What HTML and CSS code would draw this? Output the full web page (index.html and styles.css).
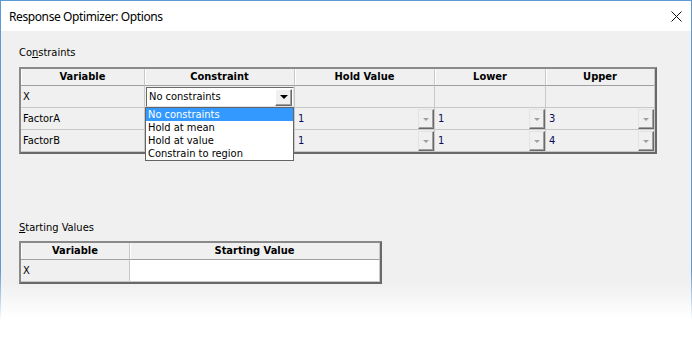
FILE: index.html
```html
<!DOCTYPE html>
<html lang="en">
<head>
    <meta charset="UTF-8">
    <meta name="viewport" content="width=device-width, initial-scale=1.0">
    <title>Response Optimizer: Options</title>
    <link rel="stylesheet" href="styles.css">
</head>
<body>
    <div class="window">
        <div class="titlebar">
            <span class="title">Response Optimizer: Options</span>
            <svg class="close" width="11" height="11" viewBox="0 0 11 11">
                <path d="M0.5 0.5 L10.5 10.5 M10.5 0.5 L0.5 10.5" stroke="#111" stroke-width="1" fill="none"/>
            </svg>
        </div>
        <div class="content">
            <div class="label">Co<u>n</u>straints</div>
            <div class="grid constraints">
                <div class="cell head">Variable</div>
                <div class="cell head">Constraint</div>
                <div class="cell head">Hold Value</div>
                <div class="cell head">Lower</div>
                <div class="cell head">Upper</div>

                <div class="cell">X</div>
                <div class="cell open">
                    <div class="combo">
                        <span>No constraints</span>
                        <span class="combo-btn"><i class="arrow"></i></span>
                    </div>
                    <ul class="dropdown">
                        <li class="selected">No constraints</li>
                        <li>Hold at mean</li>
                        <li>Hold at value</li>
                        <li>Constrain to region</li>
                    </ul>
                </div>
                <div class="cell"></div>
                <div class="cell"></div>
                <div class="cell"></div>

                <div class="cell">FactorA</div>
                <div class="cell"></div>
                <div class="cell value"><span>1</span><span class="btn"><i class="arrow off"></i></span></div>
                <div class="cell value"><span>1</span><span class="btn"><i class="arrow off"></i></span></div>
                <div class="cell value"><span>3</span><span class="btn"><i class="arrow off"></i></span></div>

                <div class="cell">FactorB</div>
                <div class="cell"></div>
                <div class="cell value"><span>1</span><span class="btn"><i class="arrow off"></i></span></div>
                <div class="cell value"><span>1</span><span class="btn"><i class="arrow off"></i></span></div>
                <div class="cell value"><span>4</span><span class="btn"><i class="arrow off"></i></span></div>
            </div>

            <div class="label second"><u>S</u>tarting Values</div>
            <div class="grid start">
                <div class="cell head">Variable</div>
                <div class="cell head">Starting Value</div>
                <div class="cell">X</div>
                <div class="cell white"></div>
            </div>
        </div>
    </div>
</body>
</html>
```

FILE: styles.css
```css
*{
    margin: 0;
    padding: 0;
    box-sizing: border-box;
}
body{
    background-color: #fff;
    font-family: "DejaVu Sans Condensed", "DejaVu Sans", sans-serif;
    font-size: 11px;
    color: #000;
}
.window{
    width: 692px;
    height: 330px;
    border: 1px solid;
    border-bottom: none;
    border-image: linear-gradient(to bottom, #5b9bd5 0, #5b9bd5 270px, #fff 320px) 1;
    display: flex;
    flex-direction: column;
}
.titlebar{
    height: 30px;
    flex-shrink: 0;
    background-color: #fff;
    display: flex;
    align-items: center;
    padding-left: 8px;
    padding-right: 9px;
}
.title{
    font-family: "Noto Sans", sans-serif;
    font-size: 12px;
    letter-spacing: -0.4px;
    flex: 1;
}
.content{
    flex: 1;
    padding: 15px 0 0 18px;
    background: linear-gradient(to bottom, #f0f0f0 0, #f0f0f0 252px, #fff 287px);
}
.label{
    height: 13px;
    line-height: 13px;
    margin-bottom: 8px;
}
.label.second{
    margin-top: 67px;
    margin-bottom: 7px;
}
.grid{
    display: grid;
    border: 2px solid #7a7a7a;
    border-color: #8a8a8a #696969 #696969 #8a8a8a;
    background-color: #f0f0f0;
}
.constraints{
    width: 638px;
    grid-template-columns: 124px 150px 140px 111px 109px;
    grid-template-rows: 17px repeat(3, 22px);
}
.start{
    width: 363px;
    grid-template-columns: 109px 250px;
    grid-template-rows: 17px 22px;
}
.cell{
    border-right: 1px solid #c8c8c8;
    border-bottom: 1px solid #c8c8c8;
    padding-left: 2px;
    line-height: 21px;
    white-space: nowrap;
}
.cell.head{
    font-weight: bold;
    text-align: center;
    line-height: 16px;
    padding-left: 0;
    border-bottom-color: #a0a0a0;
    box-shadow: inset 1px 0 #fff;
}
.cell.white{
    background-color: #fff;
}
.cell.open{
    position: relative;
    padding-left: 0;
}
.combo{
    margin: 1px 0 0 1px;
    height: 20px;
    display: flex;
    align-items: center;
    background-color: #fff;
    border: 1px solid;
    border-color: #696969 #e3e3e3 #e3e3e3 #696969;
    padding-left: 2px;
    line-height: 18px;
}
.combo span:first-child{
    flex: 1;
}
.combo-btn{
    width: 17px;
    height: 17px;
    display: flex;
    align-items: center;
    justify-content: center;
    background-color: #f0f0f0;
    border: 1px solid;
    border-color: #fff #696969 #696969 #fff;
    box-shadow: inset -1px -1px #a0a0a0;
    margin-right: 1px;
}
.arrow{
    width: 0;
    height: 0;
    border-left: 4px solid transparent;
    border-right: 4px solid transparent;
    border-top: 4px solid #000;
}
.arrow.off{
    border-left-width: 3px;
    border-right-width: 3px;
    border-top: 3px solid #a0a0a0;
}
.dropdown{
    position: absolute;
    top: 21px;
    left: 0;
    width: 149px;
    list-style: none;
    background-color: #fff;
    border: 1px solid #646464;
    z-index: 2;
}
.dropdown li{
    height: 13px;
    line-height: 13px;
    padding-left: 2px;
}
.dropdown li.selected{
    background-color: #3399ff;
    color: #fff;
}
.cell.value{
    display: flex;
    padding-left: 3px;
    color: #0c0c5a;
}
.cell.value span:first-child{
    flex: 1;
}
.btn{
    width: 16px;
    height: 20px;
    margin-top: 1px;
    display: flex;
    align-items: center;
    justify-content: center;
    background-color: #f0f0f0;
    border: 1px solid;
    border-color: #e3e3e3 #696969 #696969 #e3e3e3;
    box-shadow: inset -1px -1px #a0a0a0;
}
```
